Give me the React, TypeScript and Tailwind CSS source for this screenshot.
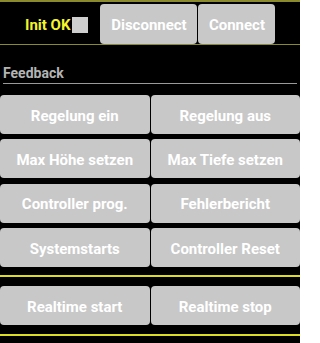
import React from "react";

const font = { fontFamily: "Roboto, 'Liberation Sans', sans-serif" };

function Btn({ label }: { label: string }) {
  return (
    <div className="flex-1 h-full rounded-[4px] bg-[#c8c8c8] flex items-center justify-center text-white font-bold text-[15px] pt-[3px]">
      {label}
    </div>
  );
}

function Row({ a, b }: { a: string; b: string }) {
  return (
    <div className="flex h-[39px] gap-[1px]">
      <Btn label={a} />
      <Btn label={b} />
    </div>
  );
}

export default function App() {
  return (
    <div className="w-[300px] h-[343px] bg-black overflow-hidden" style={font}>
      <div className="h-[2px] bg-[#8b8b2e]" />
      <div className="h-[42px] flex items-end">
        <div className="flex items-center h-[40px] pl-[25px]">
          <span className="text-[#f4f42a] font-bold text-[15px] pt-[2px]">Init OK</span>
          <div className="w-[16px] h-[16px] bg-[#cfcfcf] ml-[2px] mt-[2px]" />
        </div>
        <div className="flex h-[40px] ml-[12px] gap-[1px]">
          <div className="w-[97px] rounded-[4px] bg-[#c8c8c8] flex items-center justify-center text-white font-bold text-[15px] pt-[2px]">
            Disconnect
          </div>
          <div className="w-[77px] rounded-[4px] bg-[#c8c8c8] flex items-center justify-center text-white font-bold text-[15px] pt-[2px]">
            Connect
          </div>
        </div>
      </div>
      <div className="h-[1px] bg-[#8b8b2e]" />
      <div className="px-[3px] pt-[19px]">
        <div className="text-[#b4b4b4] font-bold text-[14px] leading-[18px]">Feedback</div>
        <div className="h-[1px] bg-[#9a9a9a] mt-[1px]" />
      </div>
      <div className="flex flex-col gap-[5.33px] mt-[11px]">
        <Row a="Regelung ein" b="Regelung aus" />
        <Row a="Max Höhe setzen" b="Max Tiefe setzen" />
        <Row a="Controller prog." b="Fehlerbericht" />
        <Row a="Systemstarts" b="Controller Reset" />
      </div>
      <div className="h-[2px] bg-[#dcdc22] mt-[8px]" />
      <div className="mt-[9px]">
        <Row a="Realtime start" b="Realtime stop" />
      </div>
      <div className="h-[2px] bg-[#dcdc22] mt-[9px]" />
    </div>
  );
}
